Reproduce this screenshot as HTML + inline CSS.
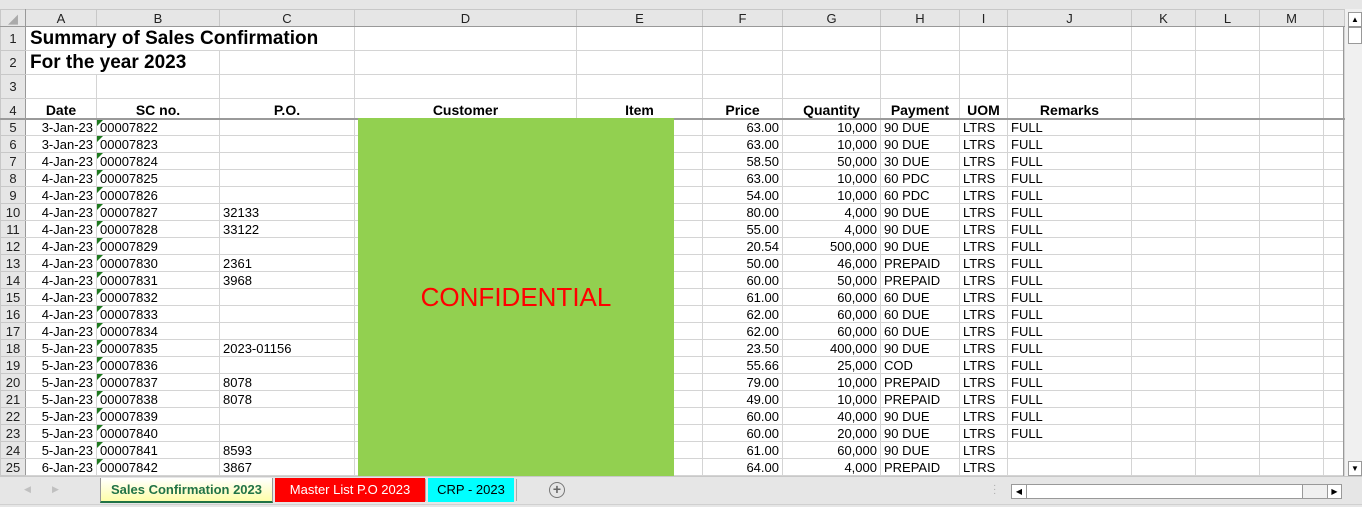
<!DOCTYPE html>
<html><head><meta charset="utf-8"><style>
*{margin:0;padding:0;box-sizing:border-box}
body{width:1362px;height:507px;overflow:hidden;background:#e6e6e6;font-family:"Liberation Sans",Arial,sans-serif;position:relative}
table{position:absolute;left:0;top:9px;border-collapse:collapse;table-layout:fixed;width:1344px;background:#fff}
td{border:1px solid #d4d4d4;font-size:13px;color:#000;white-space:nowrap;overflow:visible;padding:0 3px;height:17px;line-height:15px}
tr.h td{background:#e6e6e6;text-align:center;color:#222;font-size:13px;border-color:#c8c8c8;border-bottom:1px solid #999}
td.rh{background:#e6e6e6;text-align:center;color:#222;border-color:#c8c8c8;border-right:1px solid #999;padding:0}
tr.h td.rh{border-right:1px solid #999}
.r{text-align:right}
.t td{height:24px}
.t td.tt{font-weight:bold;font-size:19px;line-height:20px;padding-left:4px}
.hd td{height:20px;font-weight:bold;font-size:14px;text-align:center;border-bottom:2px solid #9a9a9a;vertical-align:bottom}
.hd td.rh{font-weight:normal;font-size:13px}
.sc{position:relative}
.sc:before{content:"";position:absolute;left:0;top:0;border-top:6px solid #1e7a1e;border-right:6px solid transparent}
#g{position:absolute;left:358px;top:118px;width:316px;height:358px;background:#92d050}
#g span{position:absolute;left:0;right:0;top:164px;text-align:center;color:#f00;font-size:26px;font-family:"Liberation Sans",sans-serif}
.tab{position:absolute;top:478px;height:25px;font-size:13px;line-height:24px;text-align:center}
</style></head><body>
<table>
<colgroup><col style="width:25px"><col style="width:71px"><col style="width:123px"><col style="width:135px"><col style="width:222px"><col style="width:126px"><col style="width:80px"><col style="width:98px"><col style="width:79px"><col style="width:48px"><col style="width:124px"><col style="width:64px"><col style="width:64px"><col style="width:64px"><col style="width:21px"></colgroup>
<tr class="h"><td class="rh" style="height:17px;color:#aaa">◢</td><td>A</td><td>B</td><td>C</td><td>D</td><td>E</td><td>F</td><td>G</td><td>H</td><td>I</td><td>J</td><td>K</td><td>L</td><td>M</td><td></td></tr>
<tr class="t"><td class="rh">1</td><td class="tt" colspan="3" style="border-right:1px solid #d4d4d4">Summary of Sales Confirmation</td><td></td><td></td><td></td><td></td><td></td><td></td><td></td><td></td><td></td><td></td><td></td></tr>
<tr class="t"><td class="rh">2</td><td class="tt" colspan="2">For the year 2023</td><td></td><td></td><td></td><td></td><td></td><td></td><td></td><td></td><td></td><td></td><td></td><td></td></tr>
<tr class="t"><td class="rh">3</td><td></td><td></td><td></td><td></td><td></td><td></td><td></td><td></td><td></td><td></td><td></td><td></td><td></td><td></td></tr>
<tr class="hd"><td class="rh">4</td><td>Date</td><td>SC no.</td><td>P.O.</td><td>Customer</td><td>Item</td><td>Price</td><td>Quantity</td><td>Payment</td><td>UOM</td><td>Remarks</td><td></td><td></td><td></td><td></td></tr>
<tr><td class="rh">5</td><td class="r">3-Jan-23</td><td class="sc">00007822</td><td></td><td></td><td></td><td class="r">63.00</td><td class="r">10,000</td><td>90 DUE</td><td>LTRS</td><td>FULL</td><td></td><td></td><td></td><td></td></tr>
<tr><td class="rh">6</td><td class="r">3-Jan-23</td><td class="sc">00007823</td><td></td><td></td><td></td><td class="r">63.00</td><td class="r">10,000</td><td>90 DUE</td><td>LTRS</td><td>FULL</td><td></td><td></td><td></td><td></td></tr>
<tr><td class="rh">7</td><td class="r">4-Jan-23</td><td class="sc">00007824</td><td></td><td></td><td></td><td class="r">58.50</td><td class="r">50,000</td><td>30 DUE</td><td>LTRS</td><td>FULL</td><td></td><td></td><td></td><td></td></tr>
<tr><td class="rh">8</td><td class="r">4-Jan-23</td><td class="sc">00007825</td><td></td><td></td><td></td><td class="r">63.00</td><td class="r">10,000</td><td>60 PDC</td><td>LTRS</td><td>FULL</td><td></td><td></td><td></td><td></td></tr>
<tr><td class="rh">9</td><td class="r">4-Jan-23</td><td class="sc">00007826</td><td></td><td></td><td></td><td class="r">54.00</td><td class="r">10,000</td><td>60 PDC</td><td>LTRS</td><td>FULL</td><td></td><td></td><td></td><td></td></tr>
<tr><td class="rh">10</td><td class="r">4-Jan-23</td><td class="sc">00007827</td><td>32133</td><td></td><td></td><td class="r">80.00</td><td class="r">4,000</td><td>90 DUE</td><td>LTRS</td><td>FULL</td><td></td><td></td><td></td><td></td></tr>
<tr><td class="rh">11</td><td class="r">4-Jan-23</td><td class="sc">00007828</td><td>33122</td><td></td><td></td><td class="r">55.00</td><td class="r">4,000</td><td>90 DUE</td><td>LTRS</td><td>FULL</td><td></td><td></td><td></td><td></td></tr>
<tr><td class="rh">12</td><td class="r">4-Jan-23</td><td class="sc">00007829</td><td></td><td></td><td></td><td class="r">20.54</td><td class="r">500,000</td><td>90 DUE</td><td>LTRS</td><td>FULL</td><td></td><td></td><td></td><td></td></tr>
<tr><td class="rh">13</td><td class="r">4-Jan-23</td><td class="sc">00007830</td><td>2361</td><td></td><td></td><td class="r">50.00</td><td class="r">46,000</td><td>PREPAID</td><td>LTRS</td><td>FULL</td><td></td><td></td><td></td><td></td></tr>
<tr><td class="rh">14</td><td class="r">4-Jan-23</td><td class="sc">00007831</td><td>3968</td><td></td><td></td><td class="r">60.00</td><td class="r">50,000</td><td>PREPAID</td><td>LTRS</td><td>FULL</td><td></td><td></td><td></td><td></td></tr>
<tr><td class="rh">15</td><td class="r">4-Jan-23</td><td class="sc">00007832</td><td></td><td></td><td></td><td class="r">61.00</td><td class="r">60,000</td><td>60 DUE</td><td>LTRS</td><td>FULL</td><td></td><td></td><td></td><td></td></tr>
<tr><td class="rh">16</td><td class="r">4-Jan-23</td><td class="sc">00007833</td><td></td><td></td><td></td><td class="r">62.00</td><td class="r">60,000</td><td>60 DUE</td><td>LTRS</td><td>FULL</td><td></td><td></td><td></td><td></td></tr>
<tr><td class="rh">17</td><td class="r">4-Jan-23</td><td class="sc">00007834</td><td></td><td></td><td></td><td class="r">62.00</td><td class="r">60,000</td><td>60 DUE</td><td>LTRS</td><td>FULL</td><td></td><td></td><td></td><td></td></tr>
<tr><td class="rh">18</td><td class="r">5-Jan-23</td><td class="sc">00007835</td><td>2023-01156</td><td></td><td></td><td class="r">23.50</td><td class="r">400,000</td><td>90 DUE</td><td>LTRS</td><td>FULL</td><td></td><td></td><td></td><td></td></tr>
<tr><td class="rh">19</td><td class="r">5-Jan-23</td><td class="sc">00007836</td><td></td><td></td><td></td><td class="r">55.66</td><td class="r">25,000</td><td>COD</td><td>LTRS</td><td>FULL</td><td></td><td></td><td></td><td></td></tr>
<tr><td class="rh">20</td><td class="r">5-Jan-23</td><td class="sc">00007837</td><td>8078</td><td></td><td></td><td class="r">79.00</td><td class="r">10,000</td><td>PREPAID</td><td>LTRS</td><td>FULL</td><td></td><td></td><td></td><td></td></tr>
<tr><td class="rh">21</td><td class="r">5-Jan-23</td><td class="sc">00007838</td><td>8078</td><td></td><td></td><td class="r">49.00</td><td class="r">10,000</td><td>PREPAID</td><td>LTRS</td><td>FULL</td><td></td><td></td><td></td><td></td></tr>
<tr><td class="rh">22</td><td class="r">5-Jan-23</td><td class="sc">00007839</td><td></td><td></td><td></td><td class="r">60.00</td><td class="r">40,000</td><td>90 DUE</td><td>LTRS</td><td>FULL</td><td></td><td></td><td></td><td></td></tr>
<tr><td class="rh">23</td><td class="r">5-Jan-23</td><td class="sc">00007840</td><td></td><td></td><td></td><td class="r">60.00</td><td class="r">20,000</td><td>90 DUE</td><td>LTRS</td><td>FULL</td><td></td><td></td><td></td><td></td></tr>
<tr><td class="rh">24</td><td class="r">5-Jan-23</td><td class="sc">00007841</td><td>8593</td><td></td><td></td><td class="r">61.00</td><td class="r">60,000</td><td>90 DUE</td><td>LTRS</td><td></td><td></td><td></td><td></td><td></td></tr>
<tr><td class="rh">25</td><td class="r">6-Jan-23</td><td class="sc">00007842</td><td>3867</td><td></td><td></td><td class="r">64.00</td><td class="r">4,000</td><td>PREPAID</td><td>LTRS</td><td></td><td></td><td></td><td></td><td></td></tr>
</table>
<div style="position:absolute;left:1343px;top:26px;width:1px;height:450px;background:#999"></div>
<div id="g"><span>CONFIDENTIAL</span></div>
<!-- vertical scrollbar -->
<div style="position:absolute;left:1345px;top:9px;width:17px;height:467px;background:#f0f0f0"></div>
<div style="position:absolute;left:1348px;top:12px;width:14px;height:15px;background:#fff;border:1px solid #999;font-size:8px;text-align:center;line-height:13px">▲</div>
<div style="position:absolute;left:1348px;top:27px;width:14px;height:17px;background:#fff;border:1px solid #999"></div>
<div style="position:absolute;left:1348px;top:461px;width:14px;height:15px;background:#fff;border:1px solid #999;font-size:8px;text-align:center;line-height:13px">▼</div>
<!-- tab bar -->
<div style="position:absolute;left:0;top:476px;width:1362px;height:1px;background:#c8c8c8"></div>
<div style="position:absolute;left:24px;top:484px;color:#c0c0c0;font-size:9px">◀</div>
<div style="position:absolute;left:52px;top:484px;color:#c0c0c0;font-size:9px">▶</div>
<div class="tab" style="left:100px;width:173px;background:linear-gradient(#fff,#fefea8);color:#217346;font-weight:bold;border-bottom:2px solid #217346;border-left:1px solid #999;border-right:1px solid #999">Sales Confirmation 2023</div>
<div class="tab" style="left:275px;width:150px;background:#ff0000;color:#fff;height:24px">Master List P.O 2023</div>
<div class="tab" style="left:428px;width:86px;background:#00ffff;color:#000;height:24px">CRP - 2023</div>
<div style="position:absolute;left:425px;top:479px;width:1px;height:22px;background:#aaa"></div>
<div style="position:absolute;left:516px;top:479px;width:1px;height:22px;background:#aaa"></div>
<div style="position:absolute;left:549px;top:482px;width:16px;height:16px;border:1.5px solid #777;border-radius:50%;color:#666;font-size:14px;line-height:12px;text-align:center;font-weight:bold">+</div>
<div style="position:absolute;left:993px;top:484px;color:#aaa;font-size:10px;line-height:4px">·<br>·<br>·</div>
<div style="position:absolute;left:1011px;top:484px;width:331px;height:15px;background:#f0f0f0;border:1px solid #999"></div>
<div style="position:absolute;left:1012px;top:485px;width:14px;height:13px;background:#fff;font-size:8px;text-align:center;line-height:13px">◀</div>
<div style="position:absolute;left:1026px;top:485px;width:277px;height:13px;background:#fff;border:1px solid #999;border-top:0;border-bottom:0"></div>
<div style="position:absolute;left:1327px;top:485px;width:14px;height:13px;background:#fff;border-left:1px solid #999;font-size:8px;text-align:center;line-height:13px">▶</div>
<div style="position:absolute;left:0;top:504px;width:1362px;height:1px;background:#d0d0d0"></div>
</body></html>
